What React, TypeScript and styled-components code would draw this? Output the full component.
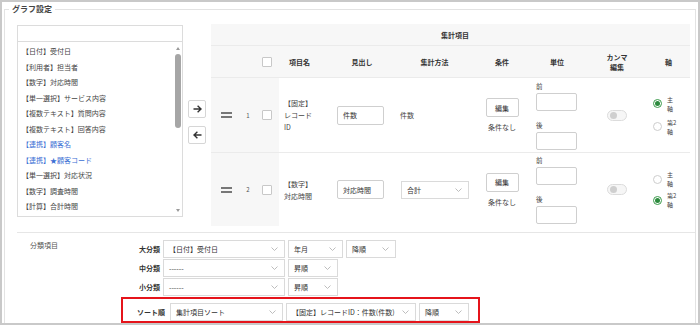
import React from "react";
import styled, { createGlobalStyle } from "styled-components";

const GlobalStyle = createGlobalStyle`
  html, body { margin: 0; padding: 0; background: #fff; }
  body { font-family: "Noto Sans CJK JP", "Noto Sans", sans-serif; color: #333; }
  * { box-sizing: border-box; }
`;

const COLS = "30px 14px 24px 53px 60px 85px 50px 60px 60px 43px";

const Frame = styled.div`
  width: 700px;
  height: 325px;
  border: 2px solid #c9c9c9;
  padding: 1px 2px 0;
  overflow: hidden;
  background: #fff;
`;

const Group = styled.fieldset`
  margin: 0;
  padding: 0;
  border: 1px solid #e3e3e3;
  min-width: 0;
  height: 340px;
`;

const Legend = styled.legend`
  margin-left: 4px;
  padding: 0 3px;
  font-size: 8px;
  line-height: 12px;
  font-weight: 700;
  color: #444;
`;

const TopRow = styled.div`
  display: flex;
  margin-top: 9px;
  padding-left: 12px;
`;

const Picker = styled.div`
  width: 166px;
  margin-top: 1px;
  display: flex;
  flex-direction: column;
`;

const SearchInput = styled.input`
  width: 100%;
  height: 17px;
  border: 1px solid #dcdcdc;
  outline: none;
  padding: 0 4px;
  font-size: 7px;
`;

const ListBox = styled.div`
  height: 175px;
  border: 1px solid #dcdcdc;
  border-top: none;
  display: flex;
`;

const Items = styled.div`
  flex: 1;
  padding: 2px 0 0 4px;
`;

const ListItem = styled.div<{ $link?: boolean }>`
  height: 15.5px;
  line-height: 15.5px;
  font-size: 7px;
  white-space: nowrap;
  color: ${(p) => (p.$link ? "#3b6fd4" : "#444")};
`;

const ScrollTrack = styled.div`
  width: 9px;
  display: flex;
  flex-direction: column;
  align-items: center;
  padding: 5px 0 4px;
`;

const ArrowUp = styled.div`
  width: 0;
  height: 0;
  border-left: 2.5px solid transparent;
  border-right: 2.5px solid transparent;
  border-bottom: 3px solid #9a9a9a;
`;

const ArrowDown = styled.div`
  width: 0;
  height: 0;
  border-left: 2.5px solid transparent;
  border-right: 2.5px solid transparent;
  border-top: 3px solid #9a9a9a;
`;

const Thumb = styled.div`
  width: 6px;
  height: 74px;
  margin-top: 4px;
  border-radius: 3px;
  background: #a6a6a6;
`;

const Spacer = styled.div`
  flex: 1;
`;

const Movers = styled.div`
  display: flex;
  flex-direction: column;
  gap: 8px;
  margin: 0 5px;
  padding-top: 76px;
`;

const MoveButton = styled.button`
  width: 18px;
  height: 18px;
  padding: 0;
  border: 1px solid #d6d6d6;
  border-radius: 2px;
  background: #fff;
  display: flex;
  align-items: center;
  justify-content: center;
`;

const Table = styled.div`
  width: 479px;
  background: #f7f7f7;
  display: flex;
  flex-direction: column;
`;

const TitleRow = styled.div`
  height: 21px;
  display: flex;
  align-items: center;
  justify-content: center;
  padding-left: 9px;
  font-size: 7px;
  font-weight: 700;
  color: #333;
`;

const HeadRow = styled.div`
  display: grid;
  grid-template-columns: ${COLS};
  height: 32px;
  border-top: 1px solid #ebebeb;
  align-items: center;
`;

const HeadCell = styled.div<{ $left?: boolean }>`
  display: flex;
  justify-content: ${(p) => (p.$left ? "flex-start" : "center")};
  padding-left: ${(p) => (p.$left ? "10px" : "0")};
  text-align: center;
  font-size: 7px;
  line-height: 10px;
  font-weight: 700;
  color: #333;
`;

const DataRow = styled.div<{ $h: number }>`
  display: grid;
  grid-template-columns: ${COLS};
  height: ${(p) => p.$h}px;
  border-top: 1px solid #ebebeb;
  background: #fff;
`;

const DataCell = styled.div<{ $gray?: boolean; $align?: string; $pad?: number }>`
  display: flex;
  align-items: center;
  justify-content: ${(p) => p.$align || "center"};
  padding-left: ${(p) => p.$pad || 0}px;
  background: ${(p) => (p.$gray ? "#f7f7f7" : "transparent")};
  font-size: 7px;
  color: #444;
`;

const RowNum = styled.span`
  font-size: 6px;
  color: #555;
`;

const Check = styled.span`
  display: block;
  width: 10px;
  height: 10px;
  border: 1px solid #c8c8c8;
  border-radius: 1px;
  background: #fff;
`;

const ItemName = styled.div`
  font-size: 7px;
  line-height: 12px;
  color: #444;
`;

const TextBox = styled.div`
  width: 47px;
  height: 19px;
  border: 1px solid #cfcfcf;
  border-radius: 2px;
  background: #fff;
  display: flex;
  align-items: center;
  padding: 0 5px;
  font-size: 7px;
  color: #333;
  white-space: nowrap;
`;

const CondBox = styled.div`
  display: flex;
  flex-direction: column;
  align-items: center;
`;

const EditButton = styled.button`
  width: 33px;
  height: 19px;
  padding: 0;
  border: 1px solid #cfcfcf;
  border-radius: 2px;
  background: #fff;
  font-family: inherit;
  font-size: 7px;
  color: #333;
`;

const CondNote = styled.div`
  margin-top: 5px;
  font-size: 7px;
  line-height: 10px;
  color: #444;
`;

const UnitBox = styled.div`
  display: flex;
  flex-direction: column;
  align-items: flex-start;
`;

const UnitLabel = styled.div<{ $gap?: boolean }>`
  font-size: 6.5px;
  line-height: 10px;
  margin-bottom: 2px;
  margin-top: ${(p) => (p.$gap ? "9px" : "0")};
  color: #444;
`;

const UnitInput = styled.div`
  width: 41px;
  height: 18px;
  border: 1px solid #cfcfcf;
  border-radius: 2px;
  background: #fff;
`;

const Toggle = styled.div`
  width: 20px;
  height: 11px;
  border: 1px solid #dcdcdc;
  border-radius: 6px;
  background: #f6f6f6;
  display: flex;
  align-items: center;
  padding-left: 1.5px;
`;

const Knob = styled.span`
  display: block;
  width: 7px;
  height: 7px;
  border-radius: 50%;
  background: #cfcfcf;
`;

const AxisBox = styled.div<{ $gap: number }>`
  display: flex;
  flex-direction: column;
  gap: ${(p) => p.$gap}px;
`;

const RadioItem = styled.div`
  display: flex;
  align-items: center;
  gap: 5px;
`;

const Radio = styled.span<{ $on?: boolean }>`
  width: 9px;
  height: 9px;
  border-radius: 50%;
  border: 1px solid ${(p) => (p.$on ? "#3a9a4a" : "#cdcdcd")};
  background: #fff;
  display: flex;
  align-items: center;
  justify-content: center;
  &::after {
    content: "";
    display: ${(p) => (p.$on ? "block" : "none")};
    width: 5px;
    height: 5px;
    border-radius: 50%;
    background: #2d8a3e;
  }
`;

const RadioLabel = styled.span`
  display: flex;
  flex-direction: column;
  font-size: 6px;
  line-height: 9px;
  color: #444;
`;

const Divider = styled.div`
  margin: 6px 0 0 12px;
  border-top: 1px solid #e6e6e6;
`;

const Classification = styled.div`
  display: flex;
  padding: 7px 0 0 12px;
`;

const ClassTitle = styled.div`
  width: 104px;
  padding-left: 13px;
  font-size: 7px;
  line-height: 10px;
  color: #555;
`;

const ClassBody = styled.div`
  display: flex;
  flex-direction: column;
  gap: 1px;
`;

const LevelRow = styled.div`
  display: flex;
  align-items: center;
  gap: 3px;
  height: 18px;
`;

const LevelLabel = styled.div`
  width: 39px;
  text-align: right;
  font-size: 7px;
  font-weight: 700;
  color: #333;
`;

const SortBox = styled.div`
  display: flex;
  align-items: center;
  gap: 3px;
  align-self: flex-start;
  border: 2px solid #e5141b;
  padding: 4px 9px 0 14px;
`;

const SortLabel = styled.div`
  width: 30px;
  font-size: 7px;
  font-weight: 700;
  color: #333;
  white-space: nowrap;
`;

const SelectBox = styled.div<{ $w: number }>`
  width: ${(p) => p.$w}px;
  height: 18px;
  flex-shrink: 0;
  border: 1px solid #dadada;
  background: #fff;
  display: flex;
  align-items: center;
  justify-content: space-between;
  padding: 0 6px 0 5px;
  font-size: 7px;
  color: #333;
  white-space: nowrap;
`;

const Chevron = () => (
  <svg width="7" height="4" viewBox="0 0 7 4">
    <path d="M0.5 0.5L3.5 3.5L6.5 0.5" stroke="#b5b5b5" strokeWidth="0.9" fill="none" />
  </svg>
);

const Select = ({ w, children }: { w: number; children: React.ReactNode }) => (
  <SelectBox $w={w}>
    <span>{children}</span>
    <Chevron />
  </SelectBox>
);

const Handle = () => (
  <svg width="11" height="6" viewBox="0 0 11 6">
    <rect x="0" y="0" width="11" height="2" fill="#777" />
    <rect x="0" y="4" width="11" height="2" fill="#777" />
  </svg>
);

const ArrowIcon = ({ left }: { left?: boolean }) => (
  <svg width="9" height="8" viewBox="0 0 9 8" style={left ? { transform: "scaleX(-1)" } : undefined}>
    <path d="M0.5 4H8M4.6 0.8L8 4L4.6 7.2" stroke="#333" strokeWidth="1.4" fill="none" />
  </svg>
);

const fields: { label: string; link?: boolean }[] = [
  { label: "【日付】受付日" },
  { label: "【利用者】担当者" },
  { label: "【数字】対応時間" },
  { label: "【単一選択】サービス内容" },
  { label: "【複数テキスト】質問内容" },
  { label: "【複数テキスト】回答内容" },
  { label: "【連携】顧客名", link: true },
  { label: "【連携】★顧客コード", link: true },
  { label: "【単一選択】対応状況" },
  { label: "【数字】調査時間" },
  { label: "【計算】合計時間" },
];

type RowData = {
  h: number;
  num: string;
  name: React.ReactNode;
  heading: string;
  method: React.ReactNode;
  primary: boolean;
  axisGap: number;
};

const rows: RowData[] = [
  {
    h: 75,
    num: "1",
    name: (
      <>
        【固定】
        <br />
        レコード
        <br />
        ID
      </>
    ),
    heading: "件数",
    method: "件数",
    primary: true,
    axisGap: 5,
  },
  {
    h: 74,
    num: "2",
    name: (
      <>
        【数字】
        <br />
        対応時間
      </>
    ),
    heading: "対応時間",
    method: <Select w={68}>合計</Select>,
    primary: false,
    axisGap: 3,
  },
];

const AxisOption = ({ on, top, bottom }: { on: boolean; top: string; bottom: string }) => (
  <RadioItem>
    <Radio $on={on} />
    <RadioLabel>
      <span>{top}</span>
      <span>{bottom}</span>
    </RadioLabel>
  </RadioItem>
);

export default function App() {
  return (
    <>
      <GlobalStyle />
      <Frame>
        <Group>
          <Legend>グラフ設定</Legend>
          <TopRow>
            <Picker>
              <SearchInput readOnly value="" />
              <ListBox>
                <Items>
                  {fields.map((f) => (
                    <ListItem key={f.label} $link={f.link}>
                      {f.label}
                    </ListItem>
                  ))}
                </Items>
                <ScrollTrack>
                  <ArrowUp />
                  <Thumb />
                  <Spacer />
                  <ArrowDown />
                </ScrollTrack>
              </ListBox>
            </Picker>
            <Movers>
              <MoveButton>
                <ArrowIcon />
              </MoveButton>
              <MoveButton>
                <ArrowIcon left />
              </MoveButton>
            </Movers>
            <Table>
              <TitleRow>集計項目</TitleRow>
              <HeadRow>
                <HeadCell />
                <HeadCell />
                <HeadCell>
                  <Check />
                </HeadCell>
                <HeadCell $left>項目名</HeadCell>
                <HeadCell>見出し</HeadCell>
                <HeadCell>集計方法</HeadCell>
                <HeadCell>条件</HeadCell>
                <HeadCell>単位</HeadCell>
                <HeadCell>
                  カンマ
                  <br />
                  編集
                </HeadCell>
                <HeadCell>軸</HeadCell>
              </HeadRow>
              {rows.map((r) => (
                <DataRow key={r.num} $h={r.h}>
                  <DataCell $gray>
                    <Handle />
                  </DataCell>
                  <DataCell $gray>
                    <RowNum>{r.num}</RowNum>
                  </DataCell>
                  <DataCell $gray>
                    <Check />
                  </DataCell>
                  <DataCell $align="flex-start" $pad={5}>
                    <ItemName>{r.name}</ItemName>
                  </DataCell>
                  <DataCell $align="flex-start" $pad={5}>
                    <TextBox>{r.heading}</TextBox>
                  </DataCell>
                  <DataCell $align="flex-start" $pad={typeof r.method === "string" ? 8 : 9}>
                    {r.method}
                  </DataCell>
                  <DataCell>
                    <CondBox>
                      <EditButton>編集</EditButton>
                      <CondNote>条件なし</CondNote>
                    </CondBox>
                  </DataCell>
                  <DataCell $align="flex-start" $pad={9}>
                    <UnitBox>
                      <UnitLabel>前</UnitLabel>
                      <UnitInput />
                      <UnitLabel $gap>後</UnitLabel>
                      <UnitInput />
                    </UnitBox>
                  </DataCell>
                  <DataCell>
                    <Toggle>
                      <Knob />
                    </Toggle>
                  </DataCell>
                  <DataCell $align="flex-start" $pad={6}>
                    <AxisBox $gap={r.axisGap}>
                      <AxisOption on={r.primary} top="主" bottom="軸" />
                      <AxisOption on={!r.primary} top="第2" bottom="軸" />
                    </AxisBox>
                  </DataCell>
                </DataRow>
              ))}
            </Table>
          </TopRow>
          <Divider />
          <Classification>
            <ClassTitle>分類項目</ClassTitle>
            <ClassBody>
              <LevelRow>
                <LevelLabel>大分類</LevelLabel>
                <Select w={122}>【日付】受付日</Select>
                <Select w={55}>年月</Select>
                <Select w={50}>降順</Select>
              </LevelRow>
              <LevelRow>
                <LevelLabel>中分類</LevelLabel>
                <Select w={122}>------</Select>
                <Select w={50}>昇順</Select>
              </LevelRow>
              <LevelRow>
                <LevelLabel>小分類</LevelLabel>
                <Select w={122}>------</Select>
                <Select w={50}>昇順</Select>
              </LevelRow>
              <SortBox>
                <SortLabel>ソート順</SortLabel>
                <Select w={113}>集計項目ソート</Select>
                <Select w={130}>【固定】レコードID：件数(件数)</Select>
                <Select w={50}>降順</Select>
              </SortBox>
            </ClassBody>
          </Classification>
        </Group>
      </Frame>
    </>
  );
}
